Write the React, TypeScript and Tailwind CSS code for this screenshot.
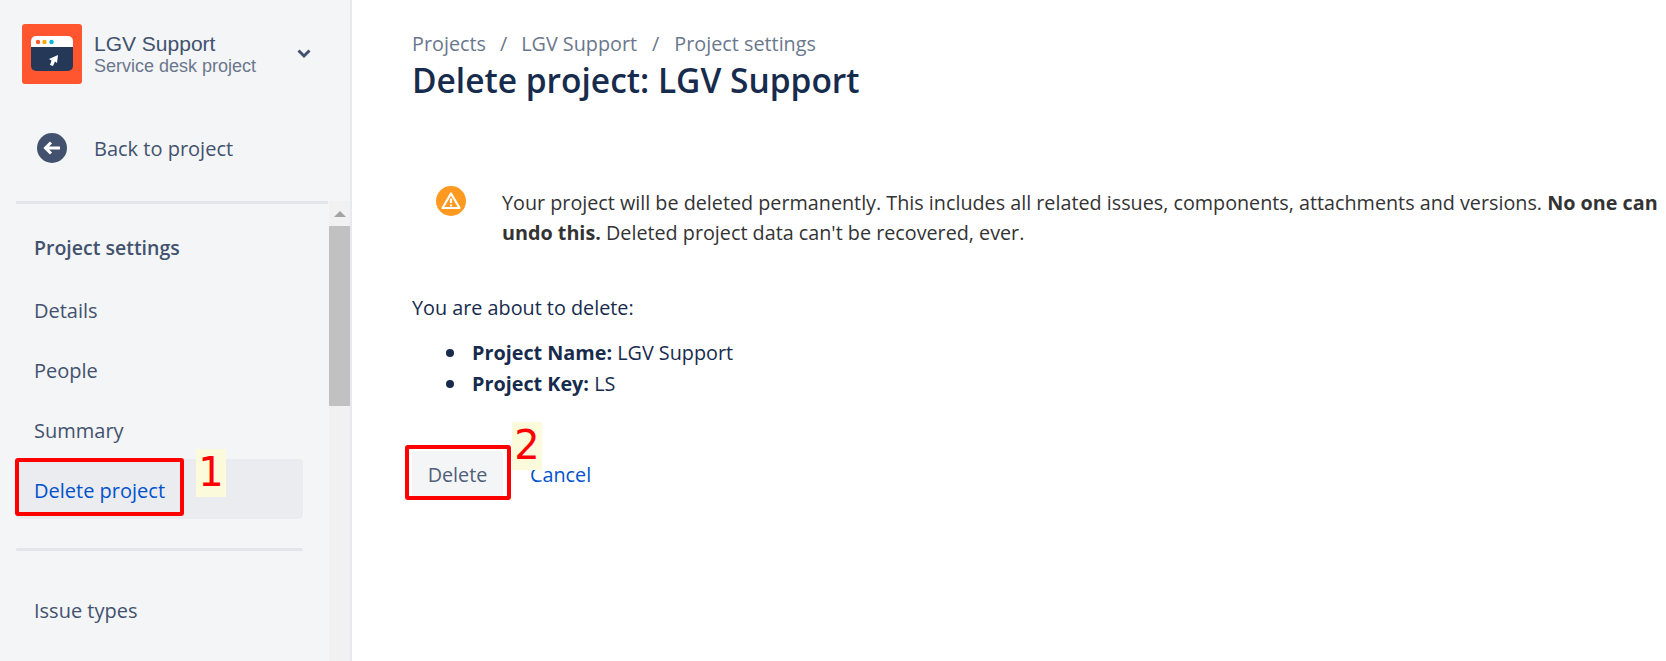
const segoe = "font-['Open_Sans','Noto_Sans',sans-serif]";

const ProjectAvatar = () => {
  return (
    <svg width="60" height="60" viewBox="0 0 60 60" className="shrink-0">
      <rect width="60" height="60" rx="3" fill="#ff5630" />
      <path d="M9 17a5 5 0 0 1 5-5h32a5 5 0 0 1 5 5v6H9z" fill="#fff" />
      <path d="M9 23h42v19a5 5 0 0 1-5 5H14a5 5 0 0 1-5-5z" fill="#253858" />
      <circle cx="16" cy="18" r="2.200" fill="#ff5630" />
      <circle cx="22.500" cy="18" r="2.200" fill="#ffab00" />
      <circle cx="29.500" cy="18" r="2.200" fill="#00b8d9" />
      <path d="M36 31l-9 4 2.500 1.500-1.500 4.500 3 1 2-4.500 2 1.500z" fill="#fff" />
    </svg>
  );
};

const NavItem = ({ name, active }: { name: string; active?: boolean }) => {
  return (
    <div
      className={
        "h-[60px] flex items-center pl-[18px] pt-[4px] rounded-[4px] text-[20px] " +
        (active ? "bg-[#ebecf0] text-[#0052cc]" : "text-[#42526e]")
      }
    >
      {name}
    </div>
  );
};

const Sidebar = () => {
  return (
    <div className={"relative w-[352px] h-full shrink-0 bg-[#f4f5f7] border-r-2 border-[#e8e9ec] flex flex-col " + segoe}>
      <div className="h-[201px] shrink-0 pl-[22px] pt-[24px]">
        <div className="flex items-center">
          <ProjectAvatar />
          <div className="ml-[12px] w-[201px] font-['Liberation_Sans',sans-serif]">
            <div className="text-[21px] leading-[24px] text-[#42526e]">LGV Support</div>
            <div className="text-[18px] leading-[20px] text-[#6b778c]">Service desk project</div>
          </div>
          <svg width="16" height="12" viewBox="0 0 16 12" className="ml-[1px]">
            <path d="M2.500 2.500L8 8l5.500-5.500" fill="none" stroke="#42526e" strokeWidth="3" />
          </svg>
        </div>
        <div className="flex items-center mt-[48px] pl-[15px]">
          <svg width="30" height="30" viewBox="0 0 30 30">
            <circle cx="15" cy="15" r="15" fill="#42526e" />
            <path d="M23 15H9M14 9.500L8.500 15l5.500 5.500" fill="none" stroke="#fff" strokeWidth="3" />
          </svg>
          <span className="ml-[27px] pt-[2px] text-[20px] text-[#42526e]">Back to project</span>
        </div>
      </div>
      <div className="flex flex-1 min-h-0">
        <div className="w-[329px] pl-[16px]">
          <div className="h-[3px] w-[312px] bg-[#e3e5ea]" />
          <div className="w-[287px]">
            <div className="h-[60px] mt-[15px] flex items-center pl-[18px] pb-[2px] text-[19.500px] font-semibold text-[#42526e]">
              Project settings
            </div>
            <NavItem name="Details" />
            <NavItem name="People" />
            <NavItem name="Summary" />
            <NavItem name="Delete project" active />
            <div className="h-[3px] bg-[#e3e5ea] mt-[29px] mb-[28px] rounded-sm" />
            <NavItem name="Issue types" />
          </div>
        </div>
        <div className="flex-1 bg-[#f1f1f1] flex flex-col">
          <div className="h-[25px] flex items-center justify-center">
            <div className="border-x-[6px] border-x-transparent border-b-[6px] border-b-[#a3a3a3]" />
          </div>
          <div className="h-[180px] bg-[#c1c1c1]" />
        </div>
      </div>
    </div>
  );
};

const Annotation = ({ num, className }: { num: string; className: string }) => {
  return (
    <div
      className={
        "absolute w-[30px] h-[48px] bg-[#fbfbdc] text-[#ff0000] text-[40px] leading-[46px] text-center font-['DejaVu_Sans',sans-serif] " +
        className
      }
    >
      {num}
    </div>
  );
};

const ListRow = ({ label, value }: { label: string; value: string }) => {
  return (
    <li className="flex items-center">
      <span className="w-2 h-2 rounded-full bg-[#172b4d] mr-[18px]" />
      <span>
        <b>{label}</b> {value}
      </span>
    </li>
  );
};

export default function App() {
  return (
    <div className={"relative flex h-[661px] w-[1666px] overflow-hidden bg-white " + segoe}>
      <Sidebar />
      <div className="flex-1 pl-[60px] pt-[28px]">
        <div className="flex text-[19.800px] leading-[32px] text-[#6b778c]">
          <span>Projects</span>
          <span className="mx-[14px]">/</span>
          <span>LGV Support</span>
          <span className="mx-[15px]">/</span>
          <span>Project settings</span>
        </div>
        <h1 className="text-[33.500px] leading-[40px] font-semibold text-[#172b4d]">Delete project: LGV Support</h1>
        <div className="flex mt-[88px] pl-[24px] text-[19.750px] leading-[30px] text-[#333333]">
          <svg width="30" height="30" viewBox="0 0 30 30" className="shrink-0 -mt-[2px]">
            <circle cx="15" cy="15" r="15" fill="#ff991f" />
            <path d="M15 7.500L6.500 22h17z" fill="none" stroke="#fff" strokeWidth="2.200" strokeLinejoin="round" />
            <path d="M15 12.500v4.500M15 18.500v2" stroke="#fff" strokeWidth="2.200" />
          </svg>
          <p className="ml-[36px] w-[1162px]">
            Your project will be deleted permanently. This includes all related issues, components, attachments and versions.{" "}
            <b>No one can undo this.</b> Deleted project data can't be recovered, ever.
          </p>
        </div>
        <p className="mt-[45px] text-[19.800px] leading-[30px] text-[#172b4d]">You are about to delete:</p>
        <ul className="pl-[34px] mt-[14px] text-[19.800px] leading-[31px] text-[#172b4d]">
          <ListRow label="Project Name:" value="LGV Support" />
          <ListRow label="Project Key:" value="LS" />
        </ul>
        <div className="flex items-center mt-[52px]">
          <button className="h-[48px] w-[91px] rounded-[4px] bg-[#f4f5f7] text-[19.800px] text-[#505f79]">Delete</button>
          <span className="ml-[27px] text-[19.800px] text-[#0052cc]">Cancel</span>
        </div>
      </div>
      <div className="absolute left-[15px] top-[458px] w-[169px] h-[58px] border-4 border-[#ff0000] rounded-[3px]" />
      <Annotation num="1" className="left-[196px] top-[449px]" />
      <div className="absolute left-[405px] top-[445px] w-[106px] h-[55px] border-4 border-[#ff0000] rounded-[3px]" />
      <Annotation num="2" className="left-[512px] top-[422px]" />
    </div>
  );
}
